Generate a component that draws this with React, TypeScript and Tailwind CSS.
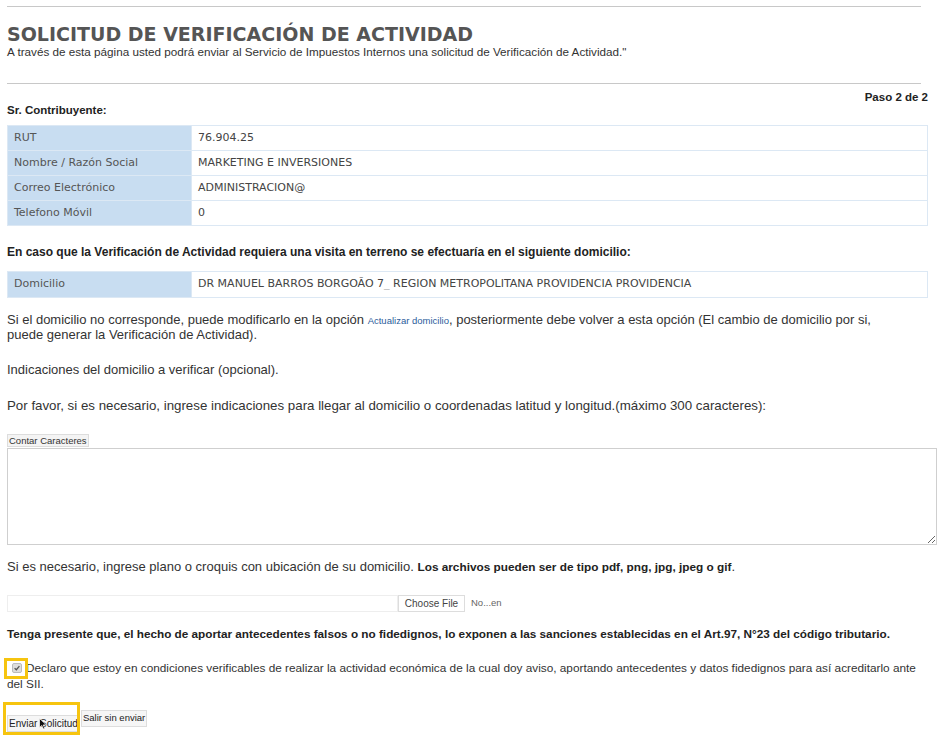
import type { ReactNode } from "react";

const sans = { fontFamily: '"Liberation Sans", Arial, sans-serif' };
const verdana = { fontFamily: '"DejaVu Sans", Verdana, sans-serif' };

const contribuyente = [
  ["RUT", "76.904.25"],
  ["Nombre / Razón Social", "MARKETING E INVERSIONES"],
  ["Correo Electrónico", "ADMINISTRACION@"],
  ["Telefono Móvil", "0"],
];

function DataRow({ label, value }: { label: string; value: ReactNode }) {
  return (
    <tr className="h-[25px]">
      <td className="w-[184px] border border-[#dce8f4] bg-[#c8ddf1] pl-[6px] text-[11px] text-[#555]">
        {label}
      </td>
      <td className="border border-[#dce8f4] bg-white pl-[6px] text-[11px] text-[#444]">
        {value}
      </td>
    </tr>
  );
}

export default function App() {
  return (
    <div className="min-h-[738px] w-[938px] bg-white pl-[7px] pr-[10px] text-[#333]" style={sans}>
      <div className="mt-[6px] w-[914px] border-t border-[#c8c8c8]" />

      <h1 className="mt-[16px] h-[22px] text-[19px] font-bold leading-[22px] text-[#555]" style={verdana}>
        SOLICITUD DE VERIFICACIÓN DE ACTIVIDAD
      </h1>
      <p className="text-[11.7px] leading-[13px] text-[#333]">
        A través de esta página usted podrá enviar al Servicio de Impuestos Internos una solicitud de Verificación de Actividad."
      </p>

      <div className="mt-[25px] w-[914px] border-t border-[#c8c8c8]" />

      <p className="mt-[7px] text-right text-[11.5px] font-bold leading-[13px] text-[#222]">Paso 2 de 2</p>
      <p className="text-[11.5px] font-bold leading-[13px] text-[#222]">Sr. Contribuyente:</p>

      <table className="mt-[8px] w-full border-collapse" style={verdana}>
        <tbody>
          {contribuyente.map(([l, v]) => (
            <DataRow key={l} label={l} value={v} />
          ))}
        </tbody>
      </table>

      <p className="mt-[20px] text-[12px] font-bold leading-[13px] text-[#222]">
        En caso que la Verificación de Actividad requiera una visita en terreno se efectuaría en el siguiente domicilio:
      </p>

      <table className="mt-[12px] w-full border-collapse" style={verdana}>
        <tbody>
          <tr className="h-[26px]">
            <td className="w-[184px] border border-[#dce8f4] bg-[#c8ddf1] pl-[6px] text-[11px] text-[#555]">Domicilio</td>
            <td className="border border-[#dce8f4] bg-white pl-[6px] text-[11px] text-[#444]">
              DR MANUEL BARROS BORGOÃO 7<span className="text-[#bbb]">_</span> REGION METROPOLITANA PROVIDENCIA PROVIDENCIA
            </td>
          </tr>
        </tbody>
      </table>

      <p className="mt-[15px] max-w-[895px] text-[13px] leading-[14px]">
        Si el domicilio no corresponde, puede modificarlo en la opción{" "}
        <a className="inline-block text-[9.5px] leading-[14px] text-[#2b5c9c]">Actualizar domicilio</a>, posteriormente debe volver a esta opción (El cambio de domicilio por si, puede generar la Verificación de Actividad).
      </p>

      <p className="mt-[21px] text-[13px] leading-[14px]">Indicaciones del domicilio a verificar (opcional).</p>

      <p className="mt-[22px] text-[13.3px] leading-[14px]">
        Por favor, si es necesario, ingrese indicaciones para llegar al domicilio o coordenadas latitud y longitud.(máximo 300 caracteres):
      </p>

      <button className="mt-[21px] block h-[13px] border border-[#ddd] bg-[#f4f4f4] px-[1px] text-[9.5px] leading-[11px] text-[#333]">
        Contar Caracteres
      </button>
      <textarea className="mt-[1px] block h-[97px] w-[930px] border border-[#cfcfcf] bg-white" />

      <p className="mt-[15px] text-[13px] leading-[14px]">
        Si es necesario, ingrese plano o croquis con ubicación de su domicilio.{" "}
        <b className="text-[11.8px] text-[#222]">Los archivos pueden ser de tipo pdf, png, jpg, jpeg o gif</b>.
      </p>

      <div className="mt-[21px] flex h-[17px] items-center">
        <div className="h-[17px] w-[391px] border border-[#eee]" />
        <span className="flex h-[17px] w-[67px] items-center justify-center border border-[#ddd] bg-white text-[10px] text-[#444]">
          Choose File
        </span>
        <span className="ml-[6px] text-[9.5px] text-[#666]">No...en</span>
      </div>

      <p className="mt-[15px] text-[11.75px] font-bold leading-[13px] text-[#222]">
        Tenga presente que, el hecho de aportar antecedentes falsos o no fidedignos, lo exponen a las sanciones establecidas en el Art.97, N°23 del código tributario.
      </p>

      <p className="mt-[20px] text-[11.8px] leading-[16px] text-[#333]">
        <span className="relative ml-[5px] mr-[4px] inline-block h-[10px] w-[10px] translate-y-[1px] rounded-[2px] border border-[#bbb] bg-[#ddd] align-baseline">
          <svg viewBox="0 0 10 10" className="absolute inset-0 h-full w-full">
            <path d="M2 5.2 L4.2 7.2 L8 2.6" fill="none" stroke="#555" strokeWidth="1.6" />
          </svg>
          <span className="absolute left-[-9px] top-[-6px] h-[21px] w-[24px] border-[3px] border-[#f6c40f]" />
        </span>
        Declaro que estoy en condiciones verificables de realizar la actividad económica de la cual doy aviso, aportando antecedentes y datos fidedignos para así acreditarlo ante del SII.
      </p>

      <div className="mt-[18px] flex">
        <span className="relative">
          <button className="h-[17px] border border-[#ddd] bg-[#f6f6f6] px-[1px] text-[10px] text-[#222]">
            Enviar Solicitud
          </button>
          <span className="absolute left-[-4px] top-[-8px] h-[33px] w-[77px] border-[3px] border-[#f6c40f]" />
          <svg viewBox="0 0 8 12" className="absolute left-[32px] top-[8px] h-[12px] w-[8px]">
            <path d="M0.5 0.5 L0.5 9.5 L2.8 7.4 L4.4 11 L5.8 10.4 L4.3 6.9 L7.4 6.9 Z" fill="#111" stroke="#fff" strokeWidth="0.7" />
          </svg>
        </span>
        <button className="ml-[1px] h-[17px] border border-[#ddd] bg-[#f6f6f6] px-[1px] text-[9.5px] text-[#222]">
          Salir sin enviar
        </button>
      </div>
    </div>
  );
}
